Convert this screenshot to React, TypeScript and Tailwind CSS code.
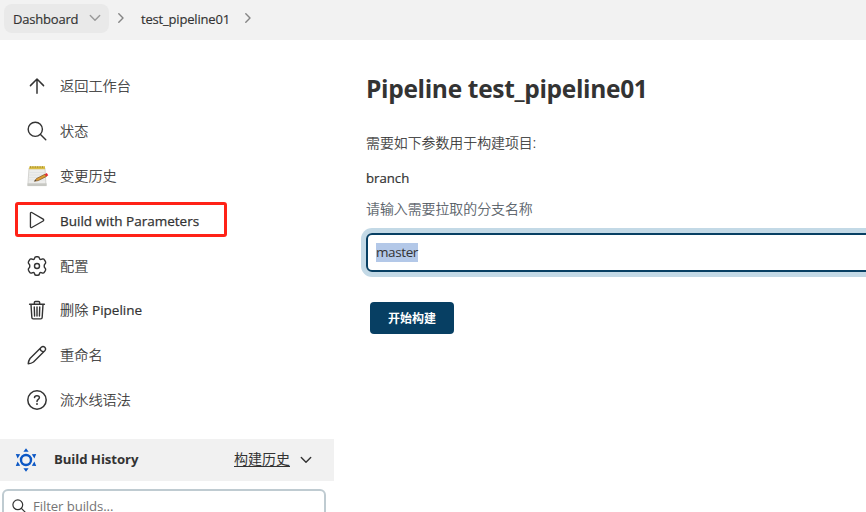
import type { ReactNode } from "react";

const stroke = {
  fill: "none",
  stroke: "currentColor",
  strokeLinecap: "round" as const,
  strokeLinejoin: "round" as const,
};

function Icon({ children, width = 32 }: { children: ReactNode; width?: number }) {
  return (
    <svg viewBox="0 0 512 512" className="size-5 shrink-0" {...stroke} strokeWidth={width}>
      {children}
    </svg>
  );
}

const ArrowUp = () => (
  <Icon width={38}>
    <path d="M88 246L256 78l168 168M256 90v350" />
  </Icon>
);

const Search = () => (
  <Icon width={36}>
    <circle cx="212" cy="212" r="182" />
    <path d="M345 345L480 480" />
  </Icon>
);

const Play = () => (
  <Icon width={34}>
    <path d="M88 84v344c0 19 18 30 34 21l292-168c17-10 17-38 0-48L122 63c-16-9-34 2-34 21z" />
  </Icon>
);

const Gear = () => (
  <svg viewBox="0 0 20 20" className="size-5 shrink-0" {...stroke} strokeWidth={1.4}>
    <path d="M7.6 2Q7.9 .7 9.2 .7h1.6Q12.1 .7 12.4 2L12.7 3.1Q13.3 3.7 14.2 3.4L15.4 3Q16.7 2.6 17.4 3.8L18.5 5.7Q19 6.8 18.2 7.7L17.4 8.6Q17 10 17.4 11.4L18.2 12.3Q19 13.2 18.5 14.3L17.4 16.2Q16.7 17.4 15.4 17L14.2 16.6Q13.3 16.3 12.7 16.9L12.4 18Q12.1 19.3 10.8 19.3H9.2Q7.9 19.3 7.6 18L7.3 16.9Q6.7 16.3 5.8 16.6L4.6 17Q3.3 17.4 2.6 16.2L1.5 14.3Q1 13.2 1.8 12.3L2.6 11.4Q3 10 2.6 8.6L1.8 7.7Q1 6.8 1.5 5.7L2.6 3.8Q3.3 2.6 4.6 3L5.8 3.4Q6.7 3.7 7.3 3.1Z" />
    <circle cx="10" cy="10" r="2.5" />
  </svg>
);

const Trash = () => (
  <Icon width={36}>
    <path d="M102 108l22 340c1 20 15 34 34 34h196c19 0 33-14 34-34l22-340M66 108h380M188 108V66c0-18 10-28 28-28h80c18 0 28 10 28 28v42M256 180v232M186 180l8 232M326 180l-8 232" />
  </Icon>
);

const Pencil = () => (
  <svg viewBox="0 0 20 20" className="size-5 shrink-0" {...stroke} strokeWidth={1.4}>
    <path d="M1.2 18.8Q1.5 15.8 3 13.5L14.3 2.2Q16 .6 17.8 2.2Q19.4 4 17.8 5.7L6.5 17Q4.2 18.5 1.2 18.8ZM13.3 3.2Q13.2 6.6 16.8 6.7" />
  </svg>
);

const Help = () => (
  <svg viewBox="0 0 20 20" className="size-5 shrink-0" {...stroke} strokeWidth={1.5}>
    <circle cx="10" cy="10" r="9.2" />
    <path d="M7.5 7.6C7.6 4.9 12.5 5 12.4 7.8C12.3 9.4 10 9.5 10 11.4" />
    <circle cx="10" cy="14" r=".95" fill="currentColor" stroke="none" />
  </svg>
);

const Notepad = () => (
  <svg viewBox="0 0 22 22" className="-mr-0.5 size-[22px] shrink-0">
    <path d="M2 3h16l1 17.5H.8z" fill="#ededeb" stroke="#c5c5c1" strokeWidth=".7" />
    <path d="M.6 18.3h19v2.8H.6z" fill="#c7c8c3" />
    <path d="M2.5 7.5h15M2.2 10h15.5M2 12.5h16M1.8 15h16" stroke="#dcdfe0" strokeWidth=".7" />
    <path d="M2.5 1.3h15.5v3H2z" fill="#d9bd45" />
    <path d="M3 2h14.5" stroke="#8a751d" strokeWidth="1.2" strokeDasharray="1 1.4" />
    <path d="M7.5 16.2l2-2.7 8.5-4.3 1.5 2.2-8.3 4.2z" fill="#dc9c32" stroke="#7d5523" strokeWidth=".7" />
    <path d="M17.7 9.2l2-1.1 1.6 2.2-2 1.2z" fill="#e52d36" />
    <path d="M7.2 16.4l1.3-1.6.9 1z" fill="#444" />
  </svg>
);

const Chevron = ({ className }: { className: string }) => (
  <svg viewBox="0 0 12 12" className={className} {...stroke} strokeWidth={1.4}>
    <path d="M1.3 3.5L6 8.2l4.7-4.7" />
  </svg>
);

const ChevronRight = () => (
  <svg viewBox="0 0 6 10" className="mb-0.5 h-2.5 w-1.5 shrink-0 text-[#858585]" {...stroke} strokeWidth={1.4}>
    <path d="M.8 .8L5 5 .8 9.2" />
  </svg>
);

const HistoryMark = () => (
  <svg viewBox="0 0 22 24" className="h-6 w-[22px] shrink-0" fill="#0b57c5">
    <circle cx="11" cy="12" r="5" fill="none" stroke="#0b57c5" strokeWidth="2.4" />
    <path d="M11 .2l2.6 3.6H8.4zM11 23.8l2.6-3.6H8.4zM.8 6l4.4.3-2.6 4.3zM21.2 6l-4.4.3 2.6 4.3zM.8 18l4.4-.3-2.6-4.3zM21.2 18l-4.4-.3 2.6-4.3z" />
  </svg>
);

const tasks = [
  { label: "返回工作台", icon: <ArrowUp /> },
  { label: "状态", icon: <Search /> },
  { label: "变更历史", icon: <Notepad /> },
  { label: "Build with Parameters", icon: <Play />, active: true },
  { label: "配置", icon: <Gear /> },
  {
    label: (
      <>
        删除 <span className="text-[13.5px] font-normal">Pipeline</span>
      </>
    ),
    icon: <Trash />,
  },
  { label: "重命名", icon: <Pencil /> },
  { label: "流水线语法", icon: <Help /> },
];

export default function App() {
  return (
    <div className="flex h-[512px] w-full flex-col overflow-hidden bg-white font-['Open_Sans','Noto_Sans_CJK_SC',sans-serif] text-[14px] leading-5 text-[#333]">
      <header className="flex h-10 shrink-0 items-start bg-[#f2f2f2] pt-1 pl-1 text-[13px]">
        <div className="flex h-[29px] w-[105px] items-center justify-between rounded-lg bg-[#e9e9e9] pr-2 pl-[9px]">
          <span className="tracking-[-0.2px] [-webkit-text-stroke:0.15px_currentColor]">Dashboard</span>
          <Chevron className="mb-0.5 size-3 text-[#999]" />
        </div>
        <div className="flex h-[29px] items-center pl-[9px]">
          <ChevronRight />
          <span className="w-[121px] pl-[17px] tracking-[-0.18px] whitespace-nowrap [-webkit-text-stroke:0.15px_currentColor]">
            test_pipeline01
          </span>
          <ChevronRight />
        </div>
      </header>
      <div className="flex min-h-0 flex-1">
        <aside className="w-[334px] shrink-0">
          <nav className="flex h-[399px] flex-col pt-6 pl-[15px]">
            {tasks.map((task, index) => (
              <div key={index} className="flex h-[44.8px] shrink-0 items-center">
                <div
                  className={
                    task.active
                      ? "mb-[3px] flex h-[35px] w-[212px] items-center gap-[13px] rounded-[3px] border-[3px] border-[#ff2217] pt-0.5 pl-[9px]"
                      : "flex items-center gap-[13px] pl-3"
                  }
                >
                  {task.icon}
                  <span
                    className={
                      task.active
                        ? "mt-px text-[13.5px] whitespace-nowrap [-webkit-text-stroke:0.25px_currentColor]"
                        : "text-[14.2px] font-light whitespace-nowrap [-webkit-text-stroke:0.2px_currentColor]"
                    }
                  >
                    {task.label}
                  </span>
                </div>
              </div>
            ))}
          </nav>
          <div className="flex h-[42px] items-center bg-[#f1f1f1] pr-[22px] pl-[15px]">
            <HistoryMark />
            <span className="mb-0.5 ml-[17px] text-[13.2px] font-bold tracking-[-0.08px]">Build History</span>
            <span className="mb-0.5 ml-auto underline underline-offset-2">构建历史</span>
            <Chevron className="ml-2.5 size-3" />
          </div>
          <div className="mt-2 ml-[2px] flex h-[38px] w-[324px] items-start gap-[7px] rounded-md border-2 border-[#bfcbd1] pt-[5px] pl-2 text-[#757575]">
            <svg viewBox="0 0 14 14" className="mt-[3px] size-3.5 text-[#333]" {...stroke} strokeWidth={1.2}>
              <circle cx="5.8" cy="5.8" r="4.9" />
              <path d="M9.4 9.4l4 4" />
            </svg>
            <span className="text-[13.2px] leading-5 tracking-[-0.1px]">Filter builds...</span>
          </div>
        </aside>
        <main className="min-w-0 flex-1 pt-[33px] pl-8">
          <h1 className="text-[24.5px] leading-8 font-bold tracking-[-0.32px] whitespace-nowrap">Pipeline test_pipeline01</h1>
          <p className="mt-7 text-[13.9px] font-light [-webkit-text-stroke:0.2px_currentColor]">需要如下参数用于构建项目:</p>
          <label className="mt-[15px] block text-[13.2px] [-webkit-text-stroke:0.2px_currentColor]">branch</label>
          <p className="mt-[11px] text-[13.9px] font-light text-[#4d545d] [-webkit-text-stroke:0.2px_currentColor]">
            请输入需要拉取的分支名称
          </p>
          <div className="mt-[14px] -mr-5 flex h-[39px] items-center rounded-md border-2 border-[#073f63] pl-2 shadow-[0_0_0_5px_#c3d9e6]">
            <span className="bg-[#b3c8e8] text-[13.5px] leading-[19px] tracking-[-0.4px]">master</span>
          </div>
          <button className="mt-[30px] ml-1 flex h-8 w-[84px] items-center justify-center rounded bg-[#073f63] pt-0.5 text-[12px] font-bold text-white">
            开始构建
          </button>
        </main>
      </div>
    </div>
  );
}
